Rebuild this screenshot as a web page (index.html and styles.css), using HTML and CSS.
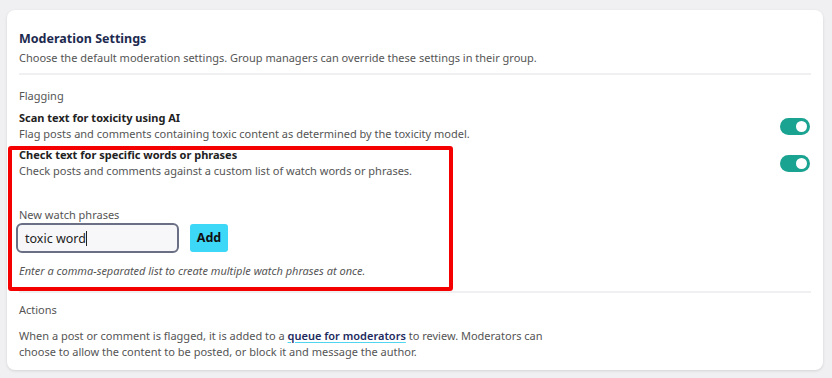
FILE: index.html
```html
<!DOCTYPE html>
<html lang="en">

<head>
    <meta charset="UTF-8">
    <meta name="viewport" content="width=device-width, initial-scale=1.0">
    <title>Moderation Settings</title>
    <link rel="stylesheet" href="styles.css">
</head>

<body>
    <div class="card">
        <h1 class="title">Moderation Settings</h1>
        <p class="intro">Choose the default moderation settings. Group managers can override these settings in their group.</p>
        <div class="rule"></div>

        <div class="label">Flagging</div>

        <div class="setting">
            <div class="setting_text">
                <div class="setting_name">Scan text for toxicity using AI</div>
                <div class="setting_desc">Flag posts and comments containing toxic content as determined by the toxicity model.</div>
            </div>
            <span class="toggle"><span class="knob"></span></span>
        </div>

        <div class="highlight">
            <div class="setting">
                <div class="setting_text">
                    <div class="setting_name">Check text for specific words or phrases</div>
                    <div class="setting_desc">Check posts and comments against a custom list of watch words or phrases.</div>
                </div>
                <span class="toggle"><span class="knob"></span></span>
            </div>

            <div class="field_label">New watch phrases</div>
            <div class="field">
                <div class="text_input">toxic word<span class="caret"></span></div>
                <a href="javascript:;" class="add_btn">Add</a>
            </div>
            <p class="hint">Enter a comma-separated list to create multiple watch phrases at once.</p>
        </div>

        <div class="rule rule_low"></div>

        <div class="label label_actions">Actions</div>
        <p class="actions_text">When a post or comment is flagged, it is added to a <a href="javascript:;" class="link">queue for moderators</a> to review. Moderators can choose to allow the content to be posted, or block it and message the author.</p>
    </div>
</body>

</html>
```

FILE: styles.css
```css
* {
    margin: 0;
    padding: 0;
    box-sizing: border-box;
}

body {
    background-color: #f0f0f2;
    padding: 10px 9px 8px 7px;
    font-family: "Noto Sans", "Open Sans", sans-serif;
    color: #555;
}

.card {
    background-color: #fff;
    border-radius: 8px;
    box-shadow: 0 1px 3px rgba(0, 0, 0, 0.12);
    padding: 19px 12px 11px;
    height: 360px;
}

.title {
    font-size: 12.5px;
    line-height: 20px;
    font-weight: 700;
    color: #1d2a4f;
}

.intro {
    margin-top: 0;
    font-size: 11px;
    line-height: 18px;
}

.rule {
    margin-top: 6px;
    height: 2px;
    background-color: #f0f0f2;
}

.label {
    margin-top: 12px;
    font-size: 11px;
    line-height: 18px;
}

.setting {
    display: flex;
    justify-content: space-between;
    align-items: center;
    margin-top: 5px;
}

.setting_name {
    font-size: 11px;
    line-height: 16px;
    font-weight: 700;
    color: #222;
}

.setting_desc {
    font-size: 11px;
    line-height: 16px;
}

.toggle {
    display: flex;
    justify-content: flex-end;
    align-items: center;
    width: 30px;
    height: 17px;
    padding-right: 3px;
    margin-right: 1px;
    border-radius: 9px;
    background-color: #1ba392;
}

.knob {
    width: 11px;
    height: 11px;
    border-radius: 50%;
    background-color: #fff;
}

.highlight {
    position: relative;
    padding-bottom: 12px;
}

.highlight .setting {
    margin-top: 5px;
}

/* red annotation frame drawn over the section */
.highlight::after {
    content: '';
    position: absolute;
    left: -11px;
    top: -1px;
    width: 445px;
    height: 145px;
    box-sizing: border-box;
    border: 4px solid #f50000;
    border-radius: 3px;
}

.field_label {
    margin-top: 28px;
    font-size: 11px;
    line-height: 16px;
}

.field {
    display: flex;
    align-items: center;
}

.text_input {
    display: flex;
    align-items: center;
    margin-left: -3px;
    width: 163px;
    height: 30px;
    padding-left: 7px;
    border: 2px solid #6a6f86;
    border-radius: 6px;
    background-color: #f7f7f9;
    font-size: 12.5px;
    color: #222;
}

.caret {
    display: inline-block;
    width: 1px;
    height: 15px;
    background-color: #222;
}

.add_btn {
    display: block;
    margin-left: 11px;
    width: 38px;
    height: 28px;
    line-height: 28px;
    text-align: center;
    background-color: #3dd7f7;
    border-radius: 3px;
    font-size: 12.5px;
    font-weight: 700;
    color: #111;
    text-decoration: none;
}

.hint {
    margin-top: 10px;
    font-size: 11px;
    line-height: 16px;
    font-style: italic;
}

.rule_low {
    margin-top: 0;
}

.label_actions {
    margin-top: 8px;
}

.actions_text {
    margin-top: 9px;
    max-width: 545px;
    font-size: 11px;
    line-height: 16px;
}

.link {
    color: #1d2a5e;
    font-weight: 600;
    text-decoration: underline;
    text-decoration-color: #4fd5f0;
    text-underline-offset: 2px;
}
```
